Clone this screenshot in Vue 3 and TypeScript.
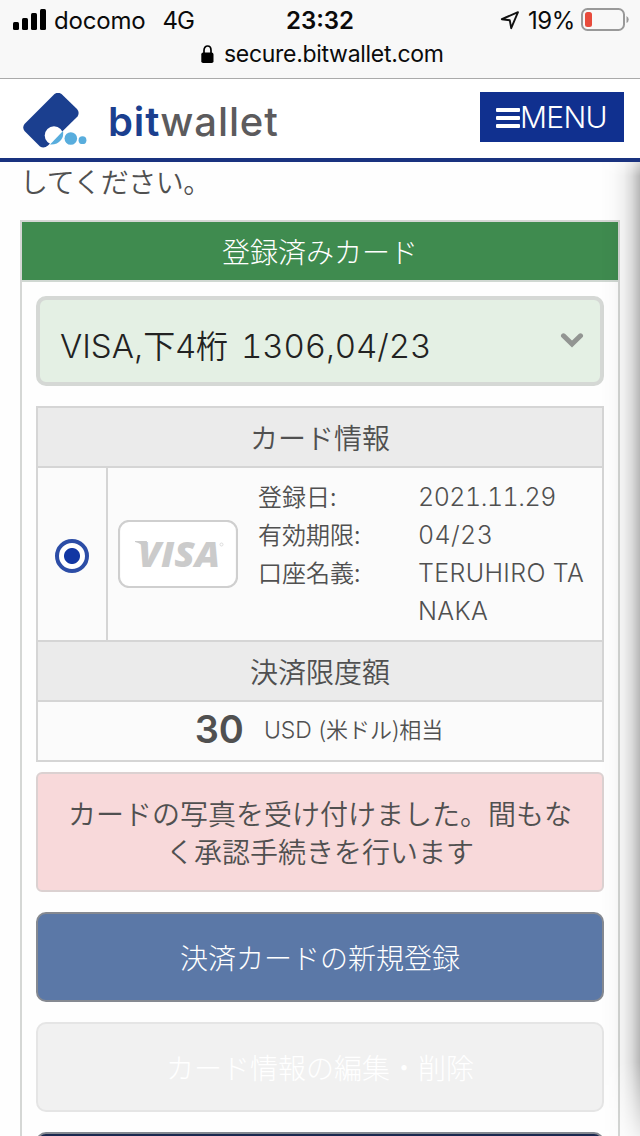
<script setup lang="ts">
interface Detail {
  label: string
  value: string
  compact?: boolean
}

const signalBars: number[] = [8, 12, 17, 21]

const details: Detail[] = [
  { label: '登録日:', value: '2021.11.29', compact: true },
  { label: '有効期限:', value: '04/23' },
  { label: '口座名義:', value: 'TERUHIRO TANAKA' },
]
</script>

<template>
  <div class="screen">
    <div class="browser">
      <div class="status">
        <div class="side left">
          <div class="signal">
            <i v-for="h in signalBars" :key="h" :style="{ height: h + 'px' }"></i>
          </div>
          <span class="carrier">docomo</span>
          <span class="network">4G</span>
        </div>
        <span class="clock">23:32</span>
        <div class="side right">
          <svg class="location" width="20" height="19" viewBox="0 0 20 19">
            <path d="M1.8 8.2 L18 1.2 L11.2 17.2 L9.8 9.3 Z" fill="none" stroke="#111" stroke-width="1.9" stroke-linejoin="round" />
          </svg>
          <span class="percent">19%</span>
          <svg class="battery" width="49" height="24" viewBox="0 0 49 24">
            <rect x="1" y="1" width="42" height="21" rx="5.5" fill="none" stroke="#999" stroke-width="2" />
            <rect x="4" y="4" width="7" height="15" rx="2.5" fill="#e84b3c" />
            <path d="M45.5 8 Q47.7 9 47.7 11.5 T45.5 15 Z" fill="#999" />
          </svg>
        </div>
      </div>
      <div class="address">
        <svg width="13" height="19" viewBox="0 0 13 19">
          <path d="M3 9 V5.2 C3 -0.4 10 -0.4 10 5.2 V9" fill="none" stroke="#000" stroke-width="1.7" />
          <rect x="0.3" y="7.6" width="12.2" height="10.4" rx="1.8" fill="#000" />
        </svg>
        <span>secure.bitwallet.com</span>
      </div>
    </div>

    <header class="header">
      <div class="logo">
        <svg width="66" height="58" viewBox="0 0 66 58">
          <path d="M31.5 1 Q35 -1.5 38.5 1 L54 16 Q57 19.5 54.5 23.5 L25 52.5 Q21 56 17 53.5 L1.5 38 Q-1 34.5 1.5 31 Z" fill="#1b3f8f" />
          <circle cx="31" cy="42.5" r="9.3" fill="#fff" />
          <path d="M40 38 L27 51.5 Q34 52 38 47 Q41 43 40 38 Z" fill="#58addd" />
          <circle cx="47.8" cy="45.5" r="6.3" fill="#58addd" />
          <circle cx="59.5" cy="47.2" r="3.9" fill="#58addd" />
        </svg>
        <span class="word"><b>bit</b>wallet</span>
      </div>
      <button class="menu">
        <span class="lines"><i></i><i></i><i></i></span>
        <span class="menu-text">MENU</span>
      </button>
    </header>

    <main class="content">
      <p class="lead">してください。</p>

      <section class="panel">
        <h2>登録済みカード</h2>
        <div class="panel-body">
          <div class="select">
            <div class="choice">
              <span class="latin">VISA,</span><span>下</span><span class="latin">4</span><span>桁</span><span class="latin digits">1306,04/23</span>
            </div>
            <svg width="24" height="17" viewBox="0 0 24 17">
              <path d="M3.5 3.8 L12 12 L20.5 3.8" fill="none" stroke="#929592" stroke-width="5" stroke-linecap="round" />
            </svg>
          </div>

          <div class="card-table">
            <h3>カード情報</h3>
            <div class="card-row">
              <div class="pick"><span class="radio"></span></div>
              <div class="visa">
                <svg width="120" height="68" viewBox="0 0 120 68">
                  <rect x="1" y="1" width="118" height="66" rx="10" fill="#fff" stroke="#cfcfcf" stroke-width="2.2" />
                  <text x="20" y="46.5" textLength="82" lengthAdjust="spacingAndGlyphs">VISA</text>
                  <path d="M17 21 H29 L27 29 Q24 23.5 17 22 Z" fill="#cbcbcb" />
                  <circle cx="103.5" cy="24.5" r="1.5" fill="none" stroke="#ddd" />
                </svg>
              </div>
              <dl class="details">
                <template v-for="d in details" :key="d.label">
                  <dt>{{ d.label }}</dt>
                  <dd :class="{ compact: d.compact }">{{ d.value }}</dd>
                </template>
              </dl>
            </div>
            <h3 class="middle">決済限度額</h3>
            <div class="limit">
              <strong>30</strong>
              <span class="currency"><span class="usd">USD</span> (米ドル)相当</span>
            </div>
          </div>

          <div class="notice">カードの写真を受け付けました。間もなく承認手続きを行います</div>
          <button class="action primary">決済カードの新規登録</button>
          <button class="action disabled">カード情報の編集・削除</button>
          <button class="action next"></button>
        </div>
      </section>
      <div class="edge"></div>
    </main>
  </div>
</template>

<style>
body {
  margin: 0;
  overflow: hidden;
}
</style>

<style scoped>
* {
  box-sizing: border-box;
}

.screen {
  width: 640px;
  height: 1136px;
  overflow: hidden;
  display: flex;
  flex-direction: column;
  background: #fefefe;
  color: #505050;
  font-family: "Noto Sans CJK JP", sans-serif;
  font-weight: 350;
}

button {
  font: inherit;
  padding: 0;
}

.browser {
  height: 79px;
  flex: none;
  background: #f8f8f8;
  border-bottom: 1px solid #aaa;
  color: #0b0b0b;
  font-family: Inter, sans-serif;
  font-weight: 400;
}

.status {
  height: 40px;
  display: grid;
  grid-template-columns: 1fr auto 1fr;
  align-items: center;
}

.side {
  display: flex;
  align-items: center;
}

.left {
  padding-left: 13px;
}

.right {
  justify-content: flex-end;
  padding-right: 10px;
}

.signal {
  display: flex;
  align-items: flex-end;
  gap: 3px;
  height: 21px;
  margin-top: -2px;
}

.signal i {
  width: 6px;
  border-radius: 1.5px;
  background: #000;
}

.carrier {
  margin-left: 8px;
  font-size: 24px;
  letter-spacing: -0.2px;
}

.network {
  margin-left: 17px;
  font-size: 24px;
  letter-spacing: -0.8px;
}

.clock {
  font-size: 24px;
  font-weight: 600;
}

.location {
  margin-right: 8px;
}

.percent {
  font-size: 24px;
  letter-spacing: -0.4px;
  margin-right: 6px;
}

.battery {
  margin-top: -1px;
}

.address {
  display: flex;
  align-items: center;
  height: 28px;
  padding-left: 201px;
  gap: 10px;
  font-size: 23px;
  letter-spacing: -0.3px;
}

.header {
  height: 83px;
  flex: none;
  display: flex;
  justify-content: space-between;
  align-items: flex-start;
  padding: 13px 16px 0 23px;
  background: #fff;
  border-bottom: 4px solid #19327f;
}

.logo {
  display: flex;
}

.logo svg {
  margin-top: 1px;
}

.word {
  margin: 6px 0 0 19px;
  font-family: Inter, sans-serif;
  font-size: 40px;
  letter-spacing: 0.9px;
  line-height: 48px;
  font-weight: 500;
  color: #5c5b5d;
}

.word b {
  font-weight: 600;
  color: #1b3f8f;
}

.menu {
  width: 144px;
  height: 50px;
  border: 0;
  background: #10308f;
  color: #fff;
  display: flex;
  align-items: center;
  padding-left: 16px;
}

.lines {
  display: flex;
  flex-direction: column;
  gap: 4px;
  margin-top: 2px;
}

.lines i {
  width: 24px;
  height: 4px;
  border-radius: 1px;
  background: #fff;
}

.menu-text {
  font-family: Inter, sans-serif;
  font-size: 30px;
  font-weight: 300;
  letter-spacing: -0.7px;
}

.content {
  position: relative;
  flex: 1;
  min-height: 0;
}

.lead {
  margin: 0 0 0 20px;
  height: 58px;
  line-height: 38px;
  font-size: 28px;
  letter-spacing: -0.5px;
}

.panel {
  margin: 0 20px;
  height: 940px;
  border: 2px solid #d5d7d5;
}

h2 {
  margin: 0;
  height: 60px;
  border-bottom: 2px solid #d0d8d2;
  background: #3f8b4f;
  color: #fff;
  text-align: center;
  font-size: 28px;
  line-height: 58px;
  font-weight: 300;
}

.panel-body {
  padding: 14px 14px 0;
}

.select {
  height: 90px;
  border: 4px solid #d5d8d5;
  border-radius: 10px;
  background: #e4f0e4;
  color: #222;
  display: flex;
  align-items: center;
  justify-content: space-between;
  padding: 0 16px 0 20px;
}

.select svg {
  margin-top: -2px;
}

.choice {
  display: flex;
  align-items: baseline;
  font-size: 32px;
  padding-top: 5px;
}

.latin {
  font-family: Inter, sans-serif;
  font-size: 33px;
  font-weight: 300;
}

.digits {
  margin-left: 13px;
  font-feature-settings: "tnum";
  letter-spacing: -0.1px;
}

.card-table {
  margin-top: 20px;
  border: 2px solid #d5d5d5;
  background: #fbfbfb;
}

h3 {
  margin: 0;
  height: 60px;
  border-bottom: 2px solid #d5d5d5;
  background: #ebebeb;
  text-align: center;
  font-size: 28px;
  line-height: 58px;
  font-weight: 350;
}

.middle {
  border-top: 2px solid #d5d5d5;
  height: 62px;
}

.card-row {
  display: flex;
  height: 172px;
}

.pick {
  width: 70px;
  padding-top: 4px;
  border-right: 2px solid #d5d5d5;
  display: grid;
  place-items: center;
}

.radio {
  width: 34px;
  height: 34px;
  border: 4px solid #2c4da6;
  border-radius: 50%;
  background: radial-gradient(circle, #1237a3 7.5px, #fff 8.5px);
}

.visa {
  padding: 52px 20px 0 10px;
}

.visa svg {
  display: block;
}

.visa text {
  font: italic 800 35px "Open Sans", sans-serif;
  fill: #cbcbcb;
}

.details {
  flex: 1;
  margin: 0;
  padding-top: 10px;
  display: grid;
  grid-template-columns: 160px 1fr;
  grid-auto-rows: min-content;
  font-size: 24px;
  line-height: 38px;
}

dt {
  margin-top: -1px;
}

dd {
  margin: 0;
  padding-right: 10px;
  font-family: Inter, sans-serif;
  font-size: 25px;
  font-weight: 300;
  letter-spacing: 0.35px;
  font-feature-settings: "tnum";
  word-break: break-all;
}

.compact {
  letter-spacing: -0.5px;
}

.limit {
  height: 58px;
  padding-bottom: 5px;
  display: flex;
  justify-content: center;
  align-items: center;
  gap: 20px;
}

.limit strong {
  font-family: Inter, sans-serif;
  font-size: 38px;
  line-height: 50px;
  font-weight: 600;
}

.currency {
  font-size: 22px;
  margin: -1px 2px 0 0;
}

.usd {
  font-family: Inter, sans-serif;
  font-weight: 300;
  font-size: 23px;
  margin-right: 2px;
}

.notice {
  margin-top: 10px;
  height: 120px;
  padding: 20px 28px 0;
  border: 2px solid #dbd1d1;
  border-radius: 6px;
  background: #f8d9da;
  text-align: center;
  font-size: 28px;
  line-height: 38px;
  line-break: anywhere;
}

.action {
  display: block;
  width: 100%;
  height: 90px;
  margin-top: 20px;
  border: 2px solid #858991;
  border-radius: 10px;
  color: #fff;
  text-align: center;
  font-size: 28px;
  font-weight: 300;
}

.primary {
  background: #5b78a7;
}

.disabled {
  border-color: #e5e5e5;
  background: #f1f1f1;
}

.next {
  background: #19284f;
}

.edge {
  position: absolute;
  top: 0;
  right: 0;
  width: 40px;
  height: 974px;
  background: linear-gradient(to right, rgba(0, 0, 0, 0) 0%, rgba(0, 0, 0, 0.015) 35%, rgba(0, 0, 0, 0.06) 60%, rgba(0, 0, 0, 0.14) 80%, rgba(0, 0, 0, 0.28) 100%);
  mask-image: linear-gradient(to bottom, rgba(0, 0, 0, 0.5) 0, #000 14px, #000 900px, rgba(0, 0, 0, 0.2) 100%);
}
</style>
